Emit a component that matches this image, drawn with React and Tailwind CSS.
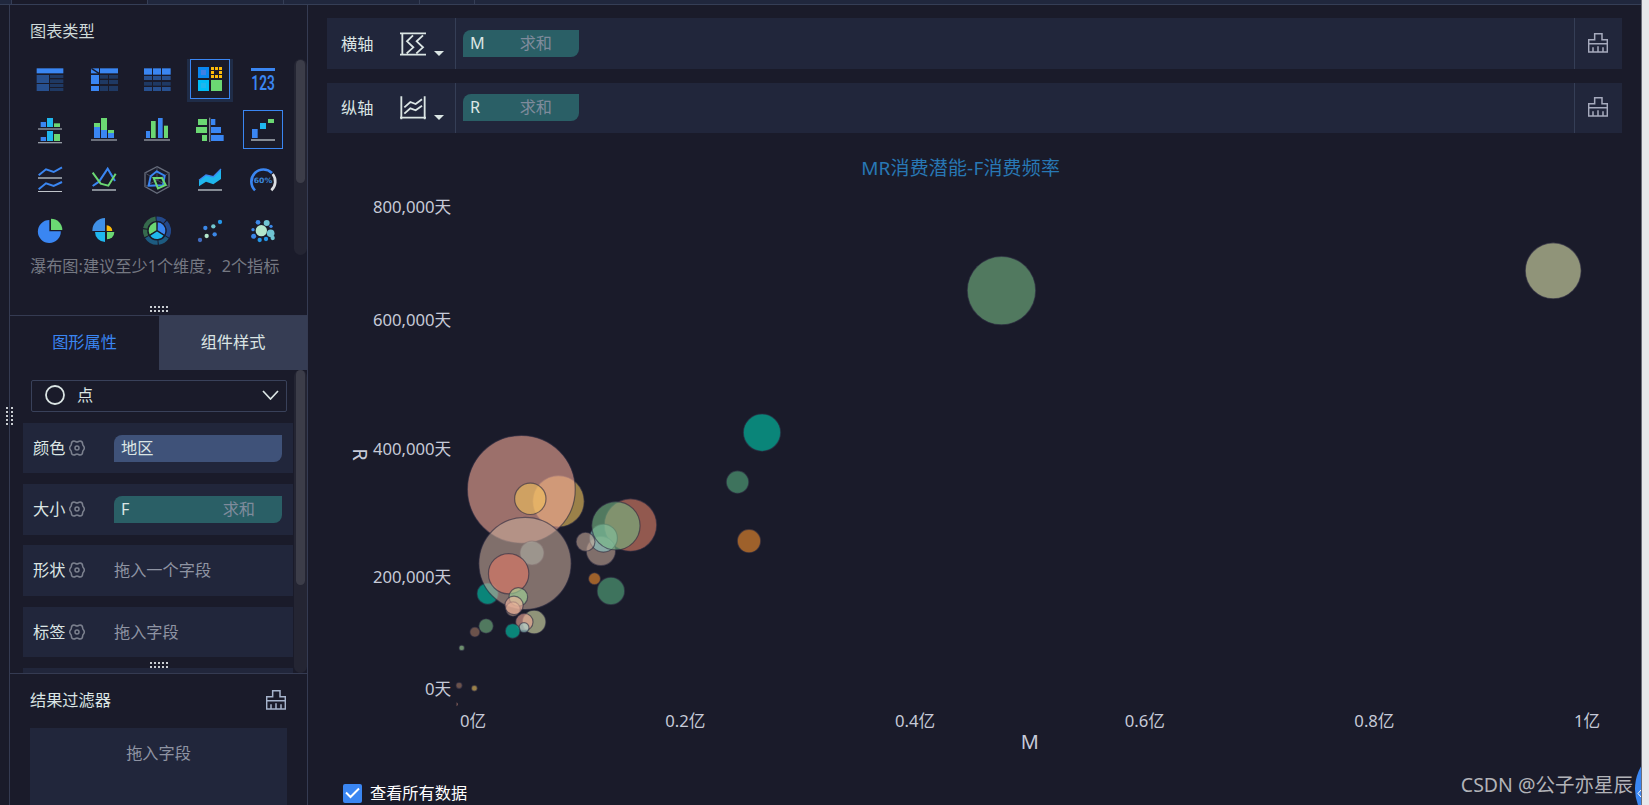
const BLUE = '#3a86f2'
const CYAN = '#1fb7ee'
const GREEN = '#6bd873'
const LINE = '#959ba4'

const bubbles = [
  { x: 1001.8, y: 290.5, r: 34.3, color: '#77b984' },
  { x: 1554.3, y: 270.7, r: 28, color: '#e0e6af' },
  { x: 762, y: 432.7, r: 18.7, color: '#00cdaf' },
  { x: 737.5, y: 482.3, r: 11.3, color: '#56af81' },
  { x: 749, y: 541.3, r: 11.7, color: '#f6912d' },
  { x: 558.2, y: 501.5, r: 25.8, color: '#f1c75f' },
  { x: 521, y: 489.5, r: 54, color: '#f3aa98' },
  { x: 531.7, y: 553.3, r: 12, color: '#8fb9b8' },
  { x: 487.3, y: 594, r: 10.7, color: '#00cdaf' },
  { x: 524.7, y: 563.7, r: 46.2, color: '#c4a998' },
  { x: 530, y: 499, r: 15.7, color: '#f1c15c' },
  { x: 508.3, y: 574, r: 20.2, color: '#e47a66' },
  { x: 630.3, y: 525.3, r: 26.3, color: '#e28469' },
  { x: 600.7, y: 551.3, r: 14.7, color: '#c4a998' },
  { x: 603.2, y: 538.3, r: 14, color: '#8fd0cc' },
  { x: 585.3, y: 542, r: 9.5, color: '#c4a998' },
  { x: 615.7, y: 526, r: 24.2, color: '#77b984' },
  { x: 594.3, y: 579, r: 6, color: '#f6912d' },
  { x: 610.7, y: 591.3, r: 13.8, color: '#56af81' },
  { x: 518, y: 597.3, r: 9.3, color: '#a5dd9b' },
  { x: 512.7, y: 609.5, r: 7.2, color: '#dcb898' },
  { x: 513.7, y: 605.7, r: 9.2, color: '#f3b49c' },
  { x: 533.8, y: 622.4, r: 11.8, color: '#e0e6af' },
  { x: 524, y: 622.4, r: 8.7, color: '#f3aa98' },
  { x: 523.7, y: 628, r: 5, color: '#a5d8d4' },
  { x: 512.3, y: 631.4, r: 7.4, color: '#00cdaf' },
  { x: 485.7, y: 626.4, r: 7.3, color: '#77b984' },
  { x: 474.5, y: 632.4, r: 5, color: '#a17863' },
  { x: 461.3, y: 648.3, r: 2.7, color: '#a5dd9b' },
  { x: 458.7, y: 686, r: 3.1, color: '#a17863' },
  { x: 474, y: 688.7, r: 2.9, color: '#f1c75f' },
]

const yTicks = [
  { y: 207, label: '800,000天' },
  { y: 320, label: '600,000天' },
  { y: 448.5, label: '400,000天' },
  { y: 577, label: '200,000天' },
  { y: 689, label: '0天' },
]

const xTicks = [
  { x: 472.5, label: '0亿' },
  { x: 685, label: '0.2亿' },
  { x: 915, label: '0.4亿' },
  { x: 1145, label: '0.6亿' },
  { x: 1375, label: '0.8亿' },
  { x: 1588, label: '1亿' },
]

// [x, y, width, height, color]
function Bars({ items }) {
  return items.map(([x, y, w, h, fill], i) => <rect key={i} x={x} y={y} width={w} height={h} fill={fill} />)
}

function Dots({ items }) {
  return items.map(([cx, cy, r, fill], i) => <circle key={i} cx={cx} cy={cy} r={r} fill={fill} />)
}

function Ring({ r, width, start, sweep, color }) {
  return (
    <circle
      cx="60"
      cy="59"
      r={r}
      fill="none"
      stroke={color}
      strokeWidth={width}
      pathLength="360"
      strokeDasharray={`${sweep} ${360 - sweep}`}
      transform={`rotate(${start - 90} 60 59)`}
    />
  )
}

const MID = '#27508f'
const DIM = '#1f3963'

const chartIcons = [
  <Bars
    items={[
      [17, 28, 80, 15, BLUE],
      [17, 48, 37, 24, MID],
      [17, 75, 37, 21, MID],
      [57, 48, 40, 9, DIM],
      [57, 61, 40, 11, DIM],
      [57, 75, 40, 9, DIM],
      [57, 87, 40, 9, DIM],
    ]}
  />,
  <>
    <Bars
      items={[
        [21, 28, 24, 15, BLUE],
        [48, 28, 54, 15, BLUE],
        [21, 48, 24, 27, BLUE],
        [21, 81, 24, 15, BLUE],
        [48, 48, 24, 11, DIM],
        [75, 48, 27, 11, DIM],
        [48, 63, 24, 12, DIM],
        [75, 63, 27, 12, DIM],
        [48, 81, 24, 15, DIM],
        [75, 81, 27, 15, DIM],
      ]}
    />
    <path d="M22 28L46 44" stroke="#1a1b2a" strokeWidth="4" />
  </>,
  <Bars
    items={[
      [21, 28, 24, 19, BLUE],
      [48, 28, 24, 19, BLUE],
      [75, 28, 26, 19, BLUE],
      [21, 51, 24, 12, MID],
      [48, 51, 24, 12, MID],
      [75, 51, 26, 12, MID],
      [21, 69, 24, 11, DIM],
      [48, 69, 24, 11, DIM],
      [75, 69, 26, 11, DIM],
      [21, 84, 24, 12, MID],
      [48, 84, 24, 12, MID],
      [75, 84, 26, 12, MID],
    ]}
  />,
  <Bars
    items={[
      [24, 24, 33, 33, '#0a87f0'],
      [33, 33, 15, 15, '#3f80e6'],
      [63, 24, 9, 9, '#fdbb0a'],
      [75, 24, 9, 9, '#fdbb0a'],
      [87, 24, 9, 9, '#fdbb0a'],
      [63, 36, 9, 9, '#fdbb0a'],
      [87, 36, 9, 9, '#fdbb0a'],
      [63, 48, 9, 9, '#fdbb0a'],
      [75, 48, 9, 9, '#fdbb0a'],
      [87, 48, 9, 9, '#fdbb0a'],
      [24, 63, 33, 33, '#02bdf6'],
      [33, 72, 15, 15, '#1fb7ee'],
      [63, 63, 33, 33, GREEN],
    ]}
  />,
  <>
    <rect x="24" y="27" width="72" height="9" fill={BLUE} />
    <text
      transform="translate(25 93) scale(0.65 1)"
      fill={BLUE}
      fontSize="63"
      fontWeight="600"
      fontFamily="Roboto, sans-serif"
    >
      123
    </text>
  </>,
  <Bars
    items={[
      [29, 36, 16, 15, BLUE],
      [48, 24, 18, 27, CYAN],
      [69, 40, 18, 11, GREEN],
      [21, 55, 72, 4, LINE],
      [29, 81, 16, 12, BLUE],
      [48, 63, 18, 30, CYAN],
      [69, 72, 18, 21, GREEN],
      [21, 96, 72, 4, LINE],
    ]}
  />,
  <Bars
    items={[
      [30, 39, 18, 12, GREEN],
      [30, 51, 18, 33, BLUE],
      [51, 24, 18, 36, GREEN],
      [51, 60, 18, 24, BLUE],
      [72, 60, 18, 9, GREEN],
      [72, 69, 18, 15, BLUE],
      [21, 88, 78, 4, LINE],
    ]}
  />,
  <Bars
    items={[
      [27, 63, 12, 21, BLUE],
      [42, 33, 14, 51, GREEN],
      [63, 24, 14, 60, BLUE],
      [81, 47, 12, 37, GREEN],
      [21, 88, 78, 4, LINE],
    ]}
  />,
  <Bars
    items={[
      [57, 23, 4, 73, '#7a808a'],
      [24, 27, 27, 18, GREEN],
      [18, 51, 33, 18, GREEN],
      [36, 75, 15, 18, GREEN],
      [63, 27, 13, 18, BLUE],
      [63, 51, 30, 18, BLUE],
      [63, 75, 38, 18, BLUE],
    ]}
  />,
  <Bars
    items={[
      [27, 57, 17, 27, BLUE],
      [51, 39, 18, 18, CYAN],
      [75, 27, 18, 12, GREEN],
      [24, 87, 72, 6, '#858b94'],
    ]}
  />,
  <>
    <path d="M23 46L45 28L68 36L93 22M23 88L45 70L68 78L93 66" fill="none" stroke={BLUE} strokeWidth="6" />
    <rect x="21" y="51" width="72" height="6" fill="#858b94" />
    <rect x="21" y="93" width="72" height="3" fill="#c0c4ca" />
  </>,
  <>
    <path d="M26 78L45 65L71 26L93 63" fill="none" stroke={BLUE} strokeWidth="6" />
    <path d="M26 38L50 71L73 77L95 41" fill="none" stroke={GREEN} strokeWidth="6" />
    <rect x="24" y="87" width="72" height="6" fill="#858b94" />
  </>,
  <>
    <path d="M60 20L96 39V80L60 100L24 80V39Z" fill="none" stroke="#666c7b" strokeWidth="4" />
    <path d="M60 20V60M24 39L60 60L96 39M24 80L60 60L96 80" fill="none" stroke="#454b5b" strokeWidth="3" />
    <path d="M59 34L83 47L78 76L35 77L41 49Z" fill="none" stroke={BLUE} strokeWidth="6" />
    <path d="M50 54H75L86 75L63 85Z" fill="none" stroke={GREEN} strokeWidth="6" />
  </>,
  <>
    <path d="M27 61L48 45L70 50L93 27V57L70 73L48 65L27 79Z" fill={CYAN} />
    <path d="M27 61L48 45L70 50L93 27" fill="none" stroke={BLUE} strokeWidth="4" />
    <rect x="24" y="87" width="72" height="6" fill="#858b94" />
  </>,
  <>
    <path d="M36 91A36 36 0 0 1 87 39" fill="none" stroke={BLUE} strokeWidth="8" />
    <path d="M89 42A36 36 0 0 1 85 91" fill="none" stroke="#dcdfe2" strokeWidth="8" />
    <text
      x="32"
      y="70"
      fill="#3a86d8"
      fontSize="22"
      fontWeight="700"
      textLength="56"
      lengthAdjust="spacingAndGlyphs"
      fontFamily="DejaVu Sans, sans-serif"
    >
      60%
    </text>
  </>,
  <>
    <path d="M55 61V27A34.5 34.5 0 1 0 89.500 61Z" fill={BLUE} />
    <path d="M60 57V23A34 34 0 0 1 94 57Z" fill={GREEN} />
  </>,
  <>
    <path d="M63 60V21A38 38 0 0 0 25 60Z" fill="#4090e6" />
    <path d="M68 60V43A17 17 0 0 1 85 60Z" fill="#fdbb0a" />
    <path d="M63 63V93A30 30 0 0 1 33 63Z" fill={CYAN} />
    <path d="M69 63V85A22 22 0 0 0 91 63Z" fill={GREEN} />
  </>,
  <>
    <Ring r={12.5} width={25} start={3} sweep={114} color={BLUE} />
    <Ring r={12.5} width={25} start={123} sweep={114} color={CYAN} />
    <Ring r={12.5} width={25} start={243} sweep={114} color={GREEN} />
    <path d="M60 59V32M60 59L38 73M60 59L82 73" stroke="#1a1b2a" strokeWidth="4" />
    <Ring r={36} width={13} start={-2} sweep={42} color="#23488a" />
    <Ring r={36} width={13} start={45} sweep={74} color="#23488a" />
    <Ring r={36} width={13} start={124} sweep={48} color="#1d5b80" />
    <Ring r={36} width={13} start={177} sweep={60} color="#1d5b80" />
    <Ring r={36} width={13} start={242} sweep={34} color="#356a4c" />
    <Ring r={36} width={13} start={281} sweep={72} color="#356a4c" />
  </>,
  <Dots
    items={[
      [30, 87, 6.5, '#426cc0'],
      [50, 75, 6.5, '#b2e6cb'],
      [74, 70, 6.5, '#3b88e8'],
      [46, 51, 6.5, '#3b88e8'],
      [70, 46, 6.5, '#72c8d0'],
      [90, 33, 6.5, '#2597e8'],
    ]}
  />,
  <Dots
    items={[
      [55, 59, 17, '#b2e6cb'],
      [83, 67, 11.5, '#6fc4d2'],
      [71, 36, 9, '#6fc4d2'],
      [45, 34, 7, '#3b88e8'],
      [84, 46, 5, '#3b88e8'],
      [30, 56, 5, '#3b88e8'],
      [32, 76, 7.5, '#3b88e8'],
      [50, 87, 6.5, '#2597e8'],
      [69, 84, 6.5, '#2597e8'],
      [89, 81, 6.5, '#6fc4d2'],
    ]}
  />,
]

function ChartIcon({ index }) {
  const icon = (
    <svg width="40" height="40" viewBox="0 0 120 120" className="block shrink-0">
      {chartIcons[index]}
    </svg>
  )
  if (index === 3) {
    return (
      <div className="flex h-[43px] w-[46px] items-start justify-center bg-[#1f2c47]">
        <div className="h-10 w-10 bg-[#1a1b2a] ring-1 ring-[#3a86f2] ring-inset">{icon}</div>
      </div>
    )
  }
  return <div className={index === 9 ? 'h-[39px] w-10 ring-1 ring-[#3a86f2] ring-inset' : 'h-10 w-10'}>{icon}</div>
}

function Brush() {
  return (
    <svg width="20" height="20" viewBox="0 0 60 60" fill="none" stroke="currentColor" strokeWidth="4.500">
      <path d="M2 20H20V2H42V20H58V57H2ZM2 32H58M15 57V43M30 57V40M45 57V43" />
    </svg>
  )
}

function Gear() {
  return (
    <svg width="16" height="16" viewBox="0 0 48 48" fill="none" stroke="#7b808e" strokeWidth="4.500">
      <path d="M24 6C28 6 29 3 33 3C38 3 41 8 41 13C41 17 46 18 46 24C46 30 41 31 41 35C41 40 38 45 33 45C29 45 28 42 24 42C20 42 19 45 15 45C10 45 7 40 7 35C7 31 2 30 2 24C2 18 7 17 7 13C7 8 10 3 15 3C19 3 20 6 24 6Z" />
      <circle cx="24" cy="24" r="6" />
    </svg>
  )
}

function Grip({ vertical }) {
  return (
    <div className={vertical ? 'grid w-[7px] grid-cols-2 gap-[2px]' : 'grid w-[18px] grid-cols-5 gap-[2px]'}>
      {Array.from({ length: 10 }, (_, i) => (
        <span key={i} className="h-[2px] w-[2px] bg-[#c9cdd2]" />
      ))}
    </div>
  )
}

function Pill({ name, agg, className }) {
  return (
    <div className={`flex h-[27px] items-center rounded-tl-lg rounded-br-lg pl-[7px] leading-none ${className}`}>
      <span className="text-[#dbe5e4]">{name}</span>
      {agg && <span className="ml-auto text-[#7f8b9c]">{agg}</span>}
    </div>
  )
}

function PropertyRow({ label, className, children }) {
  return (
    <div className={`flex shrink-0 items-center bg-[#21263b] pr-[11px] pl-[10px] ${className}`}>
      <div className="flex w-[81px] items-center gap-1 text-[#dbe5e4]">
        {label}
        <Gear />
      </div>
      {children}
    </div>
  )
}

function AxisRow({ label, icon, field, className, fieldClassName }) {
  return (
    <div className={`flex bg-[#21263b] ${className}`}>
      <div className="flex w-[129px] items-center border-r border-[#353e56] pl-[14px] text-[#dbe5e4]">
        <span className="w-[59px] shrink-0 pt-px">{label}</span>
        {icon}
        <svg width="10" height="5" viewBox="0 0 10 5" className="mt-5 ml-2">
          <path d="M0 0H10L5 5Z" fill="#dbe5e4" />
        </svg>
      </div>
      <div className={`flex flex-1 items-start px-[7px] ${fieldClassName}`}>
        <Pill name={field} agg="求和" className="w-[116px] bg-[#2a5f66] pr-[27px]" />
      </div>
      <div className="flex w-12 items-center justify-center border-l border-[#353e56] pr-[2px] pb-px text-[#a6aabd]">
        <Brush />
      </div>
    </div>
  )
}

function BubbleChart() {
  return (
    <svg width="1295" height="632" viewBox="327 133 1295 632" className="block" fontSize="16.700" fill="#c6cad8">
      <text x="960.500" y="175.500" textAnchor="middle" fontSize="19" fill="#2878b5" textLength="199">
        MR消费潜能-F消费频率
      </text>
      {yTicks.map((t) => (
        <text key={t.label} x="450.500" y={t.y + 6.5} textAnchor="end">
          {t.label}
        </text>
      ))}
      {xTicks.map((t) => (
        <text key={t.label} x={t.x} y="728" textAnchor="middle">
          {t.label}
        </text>
      ))}
      <text x="1030" y="749.500" textAnchor="middle" fontSize="20">
        M
      </text>
      <text transform="translate(352 455) rotate(90)" textAnchor="middle" fontSize="20">
        R
      </text>
      {bubbles.map((b, i) => (
        <circle
          key={i}
          cx={b.x - 0.3}
          cy={b.y + 0.3}
          r={b.r}
          fill={b.color}
          fillOpacity="0.6"
          stroke="#2b2940"
          strokeOpacity="0.6"
          strokeWidth="1.200"
        />
      ))}
      <path d="M456 703Q458 705 456 707Z" fill="#a9766c" />
    </svg>
  )
}

function Sidebar() {
  return (
    <aside className="flex w-[299px] shrink-0 flex-col border-x border-[#353b52]">
      <section className="relative h-[310px] shrink-0 pt-[14px]">
        <h2 className="pl-5 leading-6 text-[#cfdad9]">图表类型</h2>
        <div className="mt-4 flex">
          <div className="ml-[14px] grid h-[196px] grid-cols-[repeat(5,53px)] grid-rows-[51px_50px_51px_44px] justify-items-center">
            {chartIcons.map((_, i) => (
              <ChartIcon key={i} index={i} />
            ))}
          </div>
          <div className="ml-[5px] h-[196px] w-[13px] rounded-full bg-[#242533] px-[2px] pt-px">
            <div className="h-[123px] rounded-full bg-[#3c3d49]" />
          </div>
        </div>
        <p className="-mt-px pl-5 leading-6 whitespace-nowrap text-[#757882]">瀑布图:建议至少1个维度，2个指标</p>
        <div className="absolute top-[301px] left-[140px]">
          <Grip />
        </div>
      </section>

      <section className="relative h-[358px] shrink-0 overflow-hidden border-t border-[#353b52]">
        <div className="flex h-[54px] text-center leading-[52px]">
          <div className="w-[149px] text-[#3a86f2]">图形属性</div>
          <div className="flex-1 bg-[#363d54] text-[#dbe5e4]">组件样式</div>
        </div>
        <div className="flex">
          <div className="ml-[13px] flex w-[270px] flex-col">
            <div className="mt-[10px] mr-[6px] ml-2 flex h-8 items-center rounded-xs border border-[#39415a] px-[13px] pb-[2px] text-[#dbe5e4]">
              <svg width="20" height="20" viewBox="0 0 20 20" fill="none" stroke="currentColor" strokeWidth="1.800">
                <circle cx="10" cy="10" r="9" />
              </svg>
              <span className="ml-3 leading-6">点</span>
              <svg
                width="17"
                height="10"
                viewBox="0 0 17 10"
                fill="none"
                stroke="currentColor"
                strokeWidth="1.700"
                className="-mr-[6px] ml-auto"
              >
                <path d="M1 1L8.500 9L16 1" />
              </svg>
            </div>
            <PropertyRow label="颜色" className="mt-[11px] h-[50px]">
              <Pill name="地区" className="flex-1 bg-[#3f5279]" />
            </PropertyRow>
            <PropertyRow label="大小" className="mt-[11px] h-[51px]">
              <Pill name="F" agg="求和" className="flex-1 bg-[#2a5f66] pr-[27px] pb-px" />
            </PropertyRow>
            <PropertyRow label="形状" className="mt-[10px] h-[51px]">
              <span className="text-[#8f94a3]">拖入一个字段</span>
            </PropertyRow>
            <PropertyRow label="标签" className="mt-[11px] h-[50px]">
              <span className="text-[#8f94a3]">拖入字段</span>
            </PropertyRow>
            <div className="mt-[11px] h-[5px] bg-[#21263b]" />
          </div>
          <div className="ml-[1px] h-[303px] w-[13px] rounded-full bg-[#242533] px-[2px]">
            <div className="h-[215px] rounded-full bg-[#3c3d49]" />
          </div>
        </div>
        <div className="absolute top-[346px] left-[140px]">
          <Grip />
        </div>
      </section>

      <section className="flex flex-1 flex-col border-t border-[#353b52] pr-5 pl-5">
        <div className="flex h-[54px] shrink-0 items-center justify-between pb-[2px] text-[#dbe5e4]">
          结果过滤器
          <span className="pr-px text-[#a6b4cc]">
            <Brush />
          </span>
        </div>
        <div className="flex-1 bg-[#21263b] pt-[13px] text-center leading-6 text-[#8f94a3]">拖入字段</div>
      </section>
    </aside>
  )
}

const horizontalIcon = (
  <svg width="26" height="26" viewBox="0 0 78 78" fill="none" stroke="#dbe5e4" strokeWidth="5.500" className="mt-[2px]">
    <path d="M0 7H78M0 71H78M7 7V71M39 13L21 31L40 49L20 67M69 13L50 31L69 49L49 67" />
  </svg>
)

const verticalIcon = (
  <svg width="26" height="26" viewBox="0 0 78 78" fill="none" stroke="#dbe5e4" strokeWidth="5.500">
    <path d="M4 4V73M74 4V73M0 68H78M13 37L31 21L47 27L66 13M13 56L31 40L47 46L66 32" />
  </svg>
)

export default function App() {
  return (
    <div className="relative flex h-[805px] w-[1649px] overflow-hidden bg-[#1a1b2a] font-['Noto_Sans','Noto_Sans_CJK_SC',sans-serif] text-[16.2px]">
      <div className="flex w-[1641px] flex-col">
        <div className="flex h-[5px] shrink-0 border-b border-[#353e56] bg-[#20273d]">
          <div className="w-3 border-r border-[#353e56]" />
          <div className="w-[136px] border-r border-[#353e56] bg-[#1a1b2a]" />
          <div className="w-[136px] border-r border-[#353e56]" />
          <div className="w-[136px] border-r border-[#353e56]" />
          <div className="w-[55px] border-r border-[#353e56]" />
        </div>
        <div className="flex min-h-0 flex-1">
          <div className="w-[9px] shrink-0" />
          <Sidebar />
          <main className="flex flex-1 flex-col pt-[13px] pr-[19px] pl-[19px]">
            <AxisRow label="横轴" icon={horizontalIcon} field="M" className="h-[51px]" fieldClassName="pt-3" />
            <AxisRow label="纵轴" icon={verticalIcon} field="R" className="mt-[14px] h-[50px]" fieldClassName="pt-[11px]" />
            <BubbleChart />
            <label className="mt-[17px] ml-4 flex h-6 items-center gap-2 text-white">
              <span className="flex h-[19px] w-[19px] items-center justify-center rounded-xs bg-[#3a86f2]">
                <svg width="15" height="12" viewBox="0 0 15 12" fill="none" stroke="#fff" strokeWidth="2">
                  <path d="M1 5.500L5.500 10L14 1.500" />
                </svg>
              </span>
              查看所有数据
            </label>
          </main>
        </div>
      </div>
      <div className="flex-1 border-l border-[#6b6d7b] bg-[#e6e7eb]" />

      <div className="absolute top-[407px] left-[6px]">
        <Grip vertical />
      </div>
      <div className="absolute right-[16px] bottom-[5px] text-[19.5px] leading-[30px] whitespace-nowrap text-[#b2b3b8]">
        CSDN @公子亦星辰
      </div>
      <svg width="6" height="40" viewBox="1635 765 6 40" className="absolute top-[765px] left-[1635px]">
        <circle cx="1680" cy="789" r="45" fill={BLUE} />
        <path d="M1641 790L1638 793.500L1641 797" fill="none" stroke="#fff" />
      </svg>
    </div>
  )
}
